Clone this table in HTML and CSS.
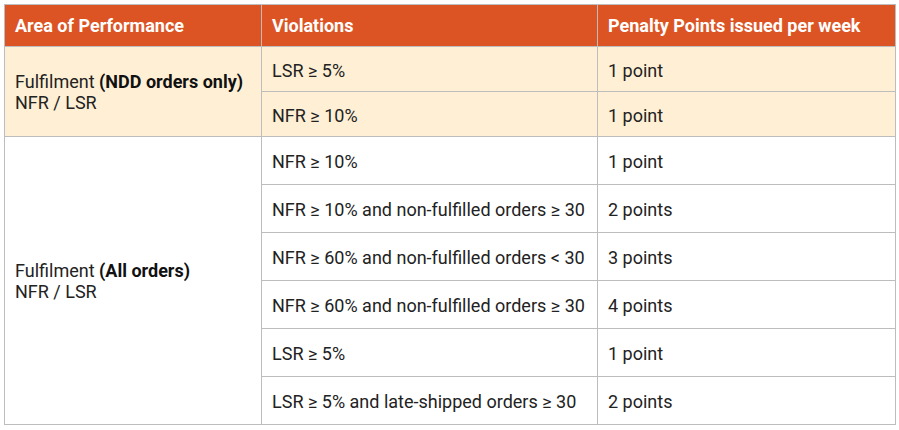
FILE: index.html
```html
<!DOCTYPE html>
<html>
<head>
<meta charset="utf-8">
<link rel="stylesheet" href="styles.css">
</head>
<body>
<table class="penalty">
  <colgroup>
    <col class="c1"><col class="c2"><col class="c3">
  </colgroup>
  <thead>
    <tr>
      <th>Area of Performance</th>
      <th>Violations</th>
      <th>Penalty Points issued per week</th>
    </tr>
  </thead>
  <tbody>
    <tr class="ndd">
      <td rowspan="2" class="area">Fulfilment <b>(NDD orders only)</b><br>NFR / LSR</td>
      <td>LSR ≥ 5%</td>
      <td>1 point</td>
    </tr>
    <tr class="ndd">
      <td>NFR ≥ 10%</td>
      <td>1 point</td>
    </tr>
    <tr class="all">
      <td rowspan="6" class="area">Fulfilment <b>(All orders)</b><br>NFR / LSR</td>
      <td>NFR ≥ 10%</td>
      <td>1 point</td>
    </tr>
    <tr class="all">
      <td>NFR ≥ 10% and non-fulfilled orders ≥ 30</td>
      <td>2 points</td>
    </tr>
    <tr class="all">
      <td>NFR ≥ 60% and non-fulfilled orders &lt; 30</td>
      <td>3 points</td>
    </tr>
    <tr class="all">
      <td>NFR ≥ 60% and non-fulfilled orders ≥ 30</td>
      <td>4 points</td>
    </tr>
    <tr class="all">
      <td>LSR ≥ 5%</td>
      <td>1 point</td>
    </tr>
    <tr class="all">
      <td>LSR ≥ 5% and late-shipped orders ≥ 30</td>
      <td>2 points</td>
    </tr>
  </tbody>
</table>
</body>
</html>
```

FILE: styles.css
```css
html, body {
  margin: 0;
  background: #ffffff;
}
body {
  padding: 4px;
  font-family: Roboto, "Liberation Sans", sans-serif;
  font-size: 18px;
  color: #222222;
}
.penalty {
  border-collapse: collapse;
  table-layout: fixed;
  width: 891px;
}
.c1 { width: 257px; }
.c2 { width: 336px; }
.c3 { width: 298px; }
.penalty th,
.penalty td {
  border: 1px solid #bdbdbd;
  padding: 0 10px;
  text-align: left;
  line-height: 21px;
}
.penalty th {
  background: #dc5424;
  color: #ffffff;
  font-weight: 700;
  height: 41px;
  vertical-align: middle;
}
.penalty td {
  vertical-align: middle;
}
.penalty td b {
  font-weight: 700;
  color: #111111;
}
.ndd td {
  background: #fff0d5;
  height: 42px;
  padding-top: 2px;
}
.all td {
  background: #ffffff;
  height: 45px;
  padding-top: 2px;
}
.penalty td.area {
  padding-top: 0;
}
```
